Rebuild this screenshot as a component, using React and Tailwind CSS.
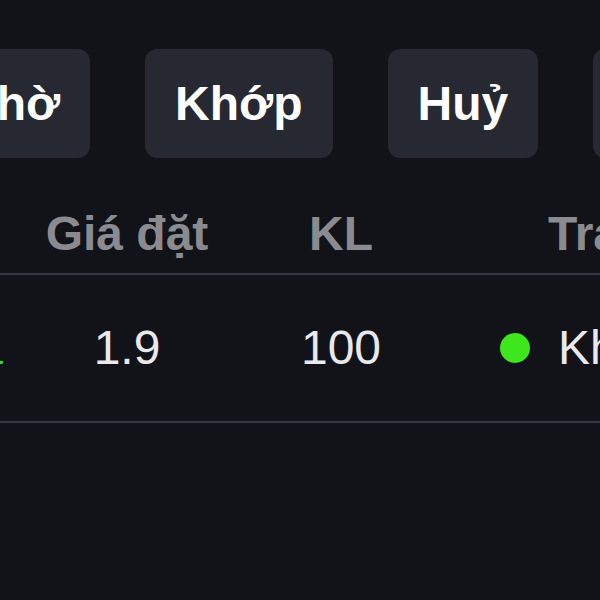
export default function App() {
  const tabs = ['Chờ', 'Khớp', 'Huỷ', 'Tất cả'];

  return (
    <div className="w-[600px] h-[600px] overflow-hidden bg-[#111318] font-['Liberation_Sans',Arial,sans-serif]">
      <div className="flex gap-[55px] pt-[49px] ml-[-68px] w-max">
        {tabs.map(t => (
          <button
            key={t}
            className="h-[109px] px-[30px] rounded-[12px] bg-[#262932] text-white text-[48px] font-bold leading-none whitespace-nowrap"
          >
            {t}
          </button>
        ))}
      </div>

      <div className="mt-[37px] ml-[-194px] w-max">
        <div className="grid grid-cols-[214px_214px_214px_320px] h-[80px] items-center border-b-2 border-[#34373e] text-[#8a8b90] text-[48px] font-bold leading-none">
          <div className="text-right pr-[30px]">Loại</div>
          <div className="text-center">Giá đặt</div>
          <div className="text-center">KL</div>
          <div className="pl-[100px] whitespace-nowrap">Trạng thái</div>
        </div>
        <div className="grid grid-cols-[214px_214px_214px_320px] h-[148px] items-center border-b-2 border-[#34373e] text-[#e8e9ec] text-[48px] leading-none">
          <div className="text-right pr-[17px] text-[#3bd02c]">Mua</div>
          <div className="text-center">1.9</div>
          <div className="text-center">100</div>
          <div className="pl-[52px] flex items-center gap-[28px] whitespace-nowrap">
            <span className="w-[30px] h-[30px] rounded-full bg-[#3ee61c] shrink-0" />
            <span>Khớp</span>
          </div>
        </div>
      </div>
    </div>
  );
}
